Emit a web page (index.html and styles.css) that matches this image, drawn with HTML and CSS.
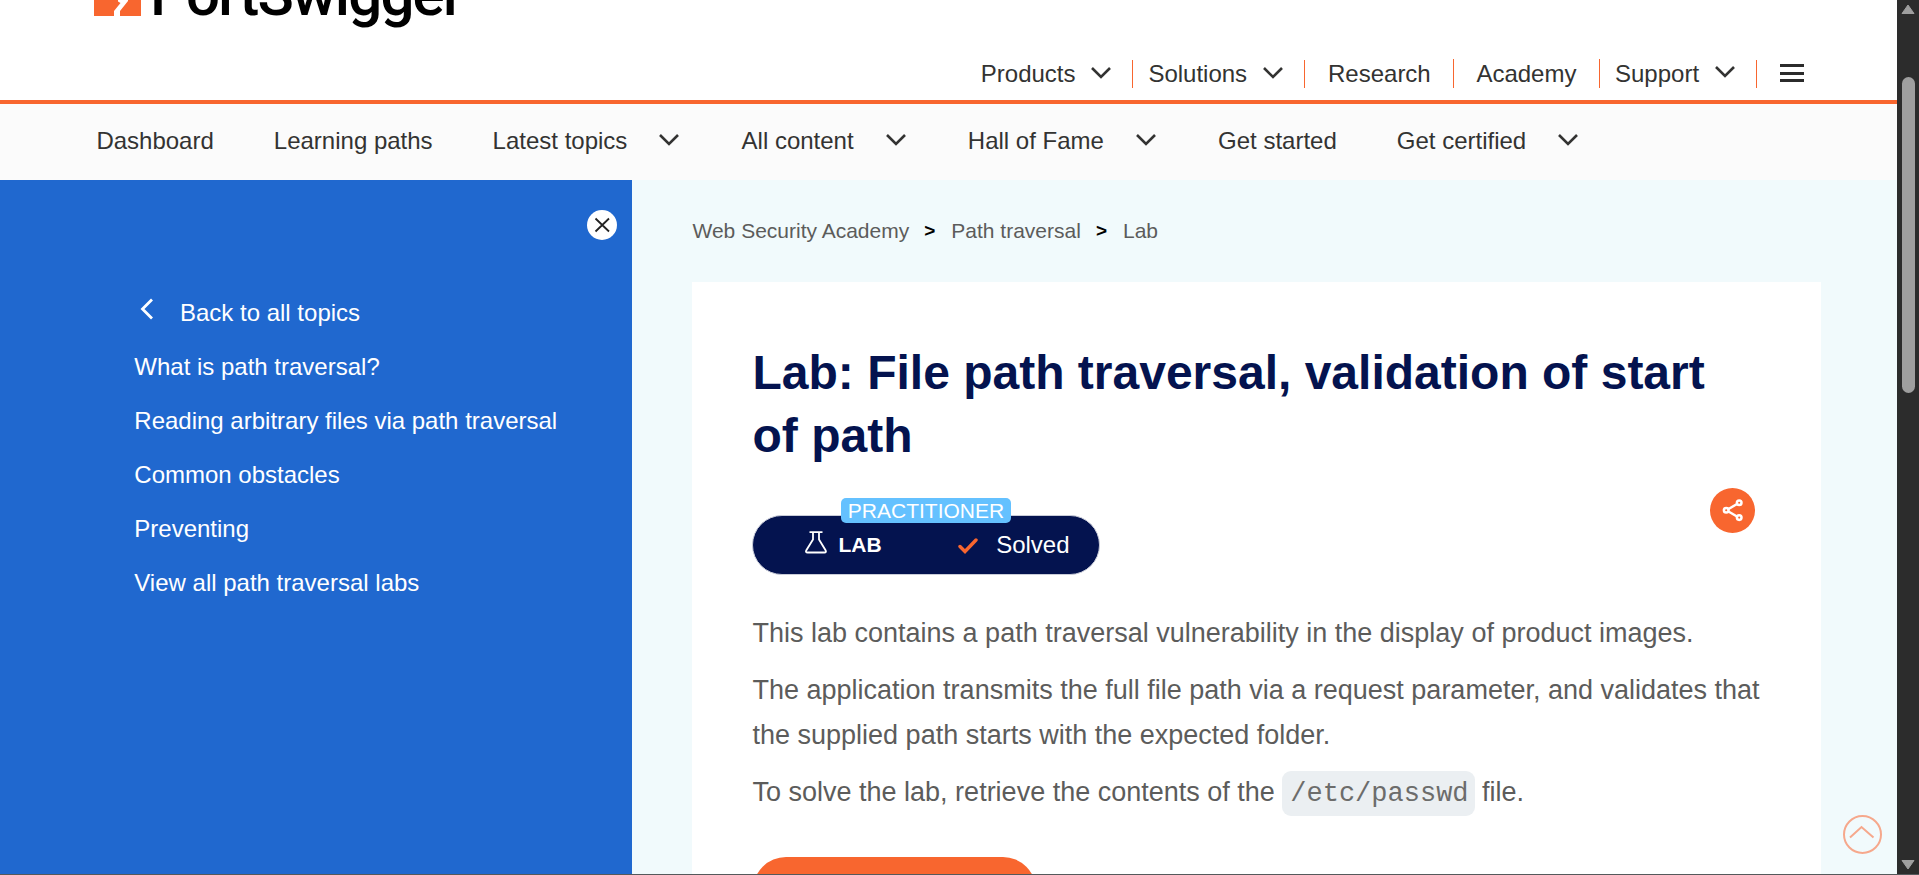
FILE: index.html
```html
<!DOCTYPE html>
<html lang="en">
<head>
<meta charset="utf-8">
<title>Lab: File path traversal, validation of start of path</title>
<link rel="stylesheet" href="styles.css">
</head>
<body>
<svg class="defs" aria-hidden="true">
  <symbol id="chev" viewBox="0 0 20 12"><path d="M1 1l9 9 9-9" fill="none" stroke="currentColor" stroke-width="2.6"/></symbol>
</svg>
<div class="window">
<div class="page">
  <header class="site">
    <div class="brand">
      <svg class="mark" width="47" height="16" viewBox="0 0 47 16"><rect width="47" height="16" fill="#f8662f"/><path d="M24 0H34V1L26 11V16H20V11L26.500 3L24 1.500Z" fill="#fff"/></svg>
      <span class="name">PortSwigger</span>
    </div>
    <nav class="main-nav">
      <a class="sec dd s1">Products<svg><use href="#chev"/></svg></a>
      <a class="sec dd s2">Solutions<svg><use href="#chev"/></svg></a>
      <a class="sec s3">Research</a>
      <a class="sec tall s4">Academy</a>
      <a class="sec dd tall s5">Support<svg><use href="#chev"/></svg></a>
      <a class="sec s6"><span class="burger"></span></a>
    </nav>
  </header>
  <nav class="sub-nav">
    <a>Dashboard</a>
    <a>Learning paths</a>
    <a>Latest topics<svg><use href="#chev"/></svg></a>
    <a>All content<svg><use href="#chev"/></svg></a>
    <a>Hall of Fame<svg><use href="#chev"/></svg></a>
    <a>Get started</a>
    <a>Get certified<svg><use href="#chev"/></svg></a>
  </nav>
  <div class="columns">
    <aside class="side">
      <div class="close"><svg width="30" height="30" viewBox="0 0 30 30"><circle cx="15" cy="15" r="15" fill="#fff"/><path d="M8.500 8.500l13.500 13M22 8.500L8.500 21.500" stroke="#222" stroke-width="1.800"/></svg></div>
      <a class="back"><svg width="14" height="22" viewBox="0 0 14 22"><path d="M12 1.500L2.500 11l9.500 9.500" fill="none" stroke="#fff" stroke-width="2.800"/></svg>Back to all topics</a>
      <a>What is path traversal?</a>
      <a>Reading arbitrary files via path traversal</a>
      <a>Common obstacles</a>
      <a>Preventing</a>
      <a>View all path traversal labs</a>
    </aside>
    <main class="content">
      <div class="crumbs"><a>Web Security Academy</a><b>&gt;</b><a>Path traversal</a><b>&gt;</b><a>Lab</a></div>
      <article class="card">
        <h1>Lab: File path traversal, validation of start of path</h1>
        <div class="status-row">
          <div class="pill">
            <span class="level">PRACTITIONER</span>
            <svg class="flask" width="22" height="23" viewBox="0 0 22 23"><path d="M4.500 1.200h13M8 1.500v7L1.200 19.500q-.8 2 1.300 2h17q2 0 1.200-2L14 8.500v-7" fill="none" stroke="#fff" stroke-width="1.800"/></svg>
            <strong>LAB</strong>
            <svg class="tick" width="20" height="16" viewBox="0 0 20 16"><path d="M2 8.500l5 5L18 2" fill="none" stroke="#f8662f" stroke-width="3.400" stroke-linecap="round"/></svg>
            <span>Solved</span>
          </div>
          <svg class="share" width="46" height="46" viewBox="0 0 46 46"><circle cx="22.500" cy="22.500" r="22.500" fill="#f8662f"/><g fill="none" stroke="#fff" stroke-width="2.500"><path d="M18.500 21L27 16M18.500 23.500L27 28.500"/><circle cx="16.200" cy="22.200" r="2.300"/><circle cx="29.200" cy="14.800" r="2.300"/><circle cx="29.200" cy="29.600" r="2.300"/></g></svg>
        </div>
        <p>This lab contains a path traversal vulnerability in the display of product images.</p>
        <p>The application transmits the full file path via a request parameter, and validates that the supplied path starts with the expected folder.</p>
        <p>To solve the lab, retrieve the contents of the <code>/etc/passwd</code> file.</p>
        <div class="cta"></div>
      </article>
    </main>
  </div>
  <svg class="to-top" width="39" height="39" viewBox="0 0 39 39"><g fill="none" stroke="#f6a88c" stroke-width="2"><circle cx="19.500" cy="19.500" r="18.500"/><path d="M7 22.500L18.500 12l12 10.500"/></g></svg>
</div>
<div class="scrollbar">
  <svg width="14" height="11" viewBox="0 0 14 11"><path d="M7 1l6 8.500H1z" fill="#9f9f9f" stroke="#9f9f9f" stroke-linejoin="round"/></svg>
  <div class="thumb"></div>
  <svg width="14" height="11" viewBox="0 0 14 11"><path d="M7 10L1 1.500h12z" fill="#9f9f9f" stroke="#9f9f9f" stroke-linejoin="round"/></svg>
</div>
</div>
<div class="edge"></div>
</body>
</html>
```
FILE: styles.css
```css
* { box-sizing: border-box; }
body { margin: 0; height: 875px; overflow: hidden; display: flex; flex-direction: column; font-family: "Liberation Sans", Arial, sans-serif; font-size: 24px; color: #333332; background: #fff; }
.defs { position: absolute; width: 0; height: 0; }
.window { height: 874px; display: flex; overflow: hidden; }
.edge { height: 1px; background: #55595b; }
.page { width: 1897px; position: relative; overflow: hidden; }
.site { height: 104px; border-bottom: 4px solid #f8662f; padding-left: 94px; overflow: hidden; }
.brand { display: flex; height: 56px; }
.mark { flex: none; }
.name { font-family: Roboto, sans-serif; font-weight: 500; font-size: 60px; line-height: 70px; letter-spacing: -1.8px; color: #000; margin: -40px 0 0 9px; height: 70px; white-space: nowrap; }
.main-nav { display: flex; justify-content: flex-end; align-items: flex-end; height: 32px; padding-right: 81px; }
.sec { height: 28px; line-height: 28px; display: flex; align-items: center; border-left: 1px solid #f8662f; white-space: nowrap; }
.tall { height: 29px; }
.sec svg { width: 20px; height: 12px; margin-left: 15.5px; margin-top: -3px; }
.s1 { width: 152px; border: 0; padding-left: 0.8px; }
.s2 { width: 172px; padding-left: 15.4px; }
.s3 { width: 149px; padding-left: 23px; }
.s4 { width: 146px; padding-left: 22.4px; }
.s5 { width: 157px; padding-left: 15px; }
.s6 { width: 60px; padding-left: 23px; }
.burger { width: 24px; height: 18px; border-top: 3px solid #2b2b2b; border-bottom: 3px solid #2b2b2b; background: linear-gradient(#2b2b2b, #2b2b2b) 0 5px / 24px 3px no-repeat; margin-top: -2px; }
.sub-nav { height: 76px; background: #fbfbfb; padding-left: 96.4px; display: flex; align-items: center; gap: 60px; white-space: nowrap; }
.sub-nav a { display: flex; align-items: center; line-height: 28px; margin-top: -3px; }
.sub-nav svg { width: 20px; height: 12px; margin: -1px 2.2px 0 32px; }
.columns { display: flex; height: 694px; }
.side { width: 632px; background: #2068cf; color: #fff; padding: 30px 15px 0 134.3px; display: flex; flex-direction: column; }
.side a { height: 54px; line-height: 54px; white-space: nowrap; }
.close { height: 76px; display: flex; justify-content: flex-end; align-items: flex-start; }
.side .back { display: flex; align-items: center; }
.back svg { margin: -8px 26px 0 5.7px; }
.content { flex: 1; background: #f1fafc; padding: 0 76px 0 60px; }
.crumbs { height: 102px; line-height: 102px; font-size: 21px; color: #5c5c5b; display: flex; padding-left: 0.5px; }
.crumbs b { color: #000; font-size: 19px; margin: 0 16px 0 15px; }
.card { background: #fff; height: 600px; padding: 59px 60px 0 60.5px; overflow: hidden; color: #5c5c5b; }
h1 { margin: 0; font-size: 48px; line-height: 63px; color: #04134f; }
.status-row { display: flex; justify-content: space-between; margin: 48px 0 0 -0.5px; height: 60px; }
.pill { width: 348px; height: 60px; border-radius: 30px; background: #04134f; border: 1px solid #c9ccd8; color: #fff; position: relative; display: flex; align-items: center; padding-left: 51.5px; }
.pill strong { font-size: 21px; margin-left: 12px; }
.tick { margin-left: 76px; margin-top: 2px; }
.tick + span { margin-left: 18.5px; }
.flask { margin-top: -5px; }
.level { position: absolute; left: 88px; top: -18px; width: 170px; height: 25px; border-radius: 5px; background: #64c1ff; font-size: 21px; line-height: 25px; text-align: center; }
.share { margin: -27px 5px 0 0; }
p { margin: 0 -10px 12px 0; font-size: 27px; line-height: 45px; }
.status-row + p { margin-top: 36px; }
code { font-family: "Liberation Mono", monospace; font-size: 27px; line-height: 30px; color: #6c6c6b; background: #ebeff2; border-radius: 9px; padding: 8px 6px 7px 8px; }
.cta { width: 283px; height: 66px; border-radius: 33px; background: #f8662f; margin-top: 42px; }
.to-top { position: absolute; left: 1843px; top: 815px; }
.scrollbar { width: 22px; background: #2c2c2c; display: flex; flex-direction: column; align-items: center; padding: 4px 0; }
.thumb { width: 13px; height: 316px; border-radius: 7px; background: #9f9f9f; margin: 62px 0 auto; }
```
